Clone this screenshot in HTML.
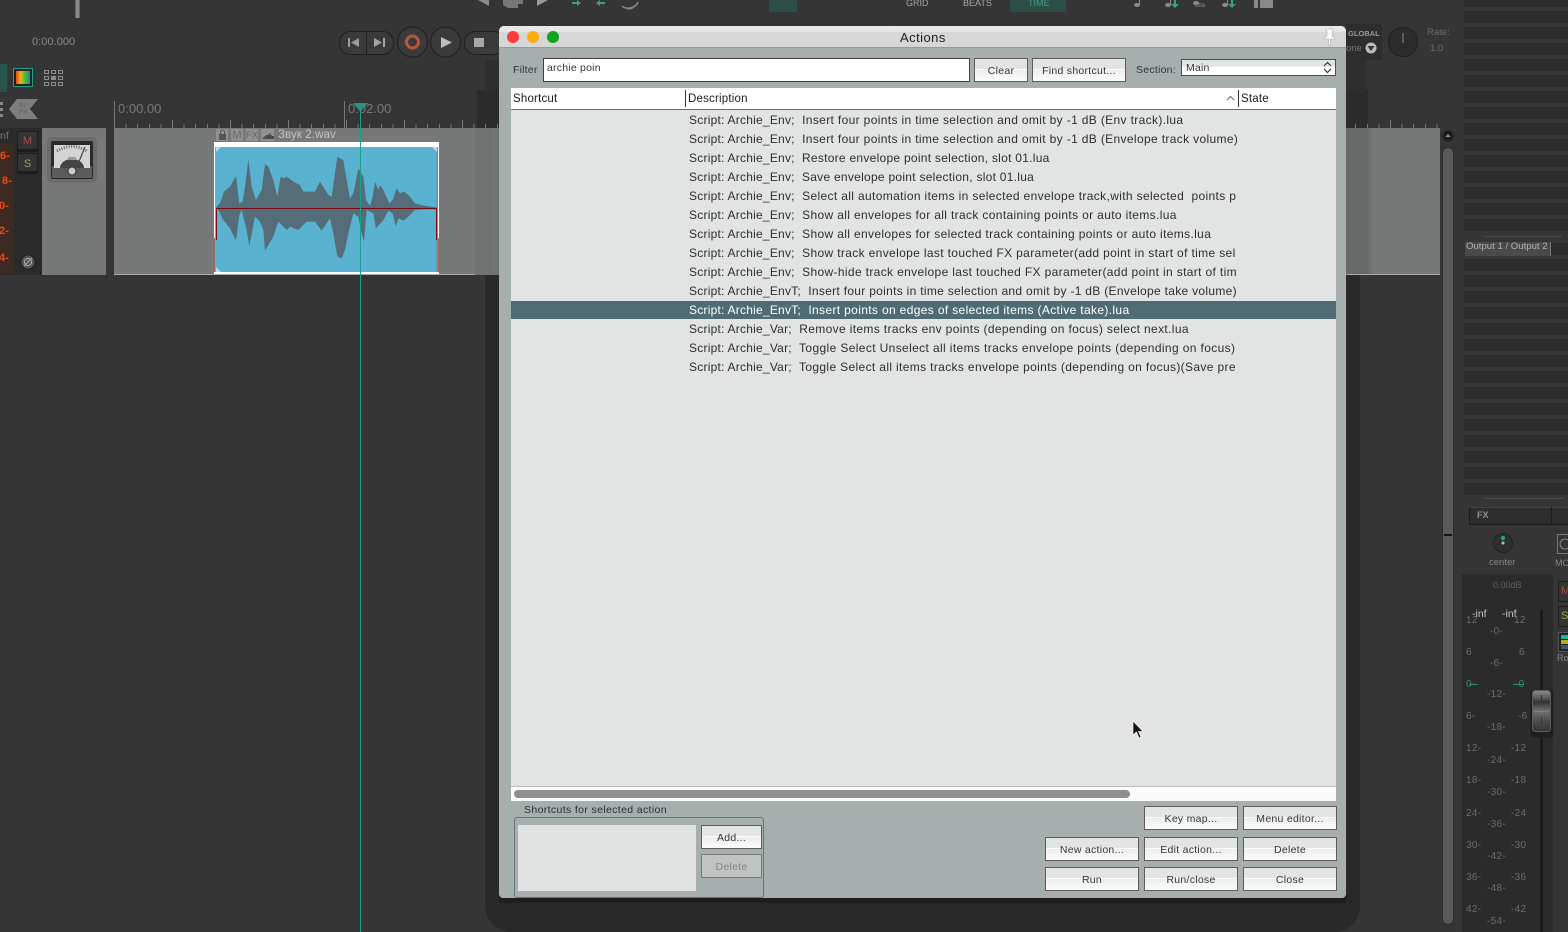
<!DOCTYPE html>
<html><head><meta charset="utf-8"><style>
html,body{margin:0;padding:0;width:1568px;height:932px;overflow:hidden;background:#353535;font-family:"Liberation Sans","Noto Sans CJK SC",sans-serif}
div,span,button{position:absolute;box-sizing:border-box}
.t{white-space:pre;line-height:1}
.r{position:absolute;left:689px;width:548px;height:19px;overflow:hidden;white-space:pre;font-size:12px;letter-spacing:.35px;line-height:21px;color:#2d2d33}
.r i{font-style:normal;letter-spacing:.23px}
.b{height:24px;width:94px;border:1px solid #5c5c5c;font-size:10.5px;letter-spacing:.27px;color:#33333a;text-align:center;line-height:25px;background:linear-gradient(#e3e5e4 0,#e3e5e4 46%,#fbfbfb 46%,#fbfbfb 51%,#eceeed 51%,#fbfbfb 100%);white-space:pre}
.g{color:#6c6c6c;font-size:10px;white-space:pre;line-height:1;letter-spacing:.3px}
</style></head><body>
<div style="left:0;top:0;width:1568px;height:932px;overflow:hidden;background:#353535">

<!-- right mixer stripes -->
<div style="left:1464px;top:0;width:104px;height:231px;background:repeating-linear-gradient(#2c2c2c 0 7px,#353535 7px 11px,#2c2c2c 11px 16px)"></div>
<div style="left:1464px;top:243px;width:104px;height:252px;background:repeating-linear-gradient(#2c2c2c 0 12px,#353535 12px 16px)"></div>
<div style="left:1485px;top:236px;width:77px;height:1px;background:#4c4c4c"></div>
<div style="left:1485px;top:498px;width:79px;height:1px;background:#4c4c4c"></div>
<div style="left:1464px;top:242px;width:87px;height:14px;background:#4a4a4a;border-left:1px solid #333;border-right:1px solid #777"></div>
<div class="t" style="left:1466px;top:242px;font-size:9.6px;color:#b3b3b3">Output 1 / Output 2</div>

<!-- dark shape behind dialog -->
<div style="left:485px;top:128px;width:875px;height:804px;background:#292929;border-radius:0 0 26px 26px"></div>
<div style="left:477px;top:90px;width:891px;height:40px;background:#2b2b2b"></div>
<div style="left:1346px;top:60px;width:20px;height:32px;background:#2e2e2e"></div>
<div style="left:485px;top:60px;width:20px;height:32px;background:#2e2e2e"></div>

<!-- ruler -->
<div style="left:114px;top:124px;width:1326px;height:4px;background:repeating-linear-gradient(90deg,#777 0 1px,transparent 1px 11.6px)"></div>
<div style="left:114px;top:120px;width:1326px;height:8px;background:repeating-linear-gradient(90deg,#777 0 1px,transparent 1px 58px)"></div>
<div style="left:114px;top:101px;width:1px;height:27px;background:#777"></div>
<div style="left:344px;top:101px;width:1px;height:27px;background:#777"></div>
<div class="t" style="left:118px;top:102px;font-size:13px;color:#787878">0:00.00</div>
<div class="t" style="left:348px;top:102px;font-size:13px;color:#787878">0:02.00</div>

<!-- track -->
<div style="left:114px;top:128px;width:1326px;height:147px;background:#777978;border-bottom:1px solid #aaa"></div>
<div style="left:475px;top:128px;width:24px;height:147px;background:#717372"></div>
<div style="left:493px;top:128px;width:1px;height:147px;background:#5f8190"></div>
<div style="left:1346px;top:128px;width:22px;height:146px;background:#666867"></div>
<div style="left:1351px;top:128px;width:1px;height:146px;background:#53788a"></div>
<div style="left:1368px;top:128px;width:3px;height:146px;background:#6d6f6e"></div>

<!-- track header -->
<div style="left:0;top:128px;width:42px;height:147px;background:#2a2a2a"></div>
<div style="left:42px;top:128px;width:64px;height:147px;background:#777978"></div>
<div style="left:0;top:143px;width:14px;height:130px;background:#3d2a22"></div>
<div class="t" style="left:0;top:131px;font-size:10.5px;color:#777">nf</div>
<div class="t" style="left:0;top:151px;font-size:11px;font-weight:bold;color:#f2470c">6-</div>
<div class="t" style="left:2px;top:176px;font-size:11px;font-weight:bold;color:#f2470c">8-</div>
<div class="t" style="left:-1px;top:201px;font-size:11px;font-weight:bold;color:#f2470c">0-</div>
<div class="t" style="left:-1px;top:226px;font-size:11px;font-weight:bold;color:#f2470c">2-</div>
<div class="t" style="left:-1px;top:253px;font-size:11px;font-weight:bold;color:#f2470c">4-</div>
<div style="left:17px;top:131px;width:21px;height:21px;background:#343434;border:1px solid #1d1d1d;border-bottom:3px solid #1d1d1d;color:#a64a44;font-size:11px;text-align:center;line-height:19px">M</div>
<div style="left:17px;top:153px;width:21px;height:21px;background:#343434;border:1px solid #1d1d1d;border-bottom:3px solid #1d1d1d;color:#a8a052;font-size:11px;text-align:center;line-height:20px">S</div>
<svg style="position:absolute;left:20px;top:254px" width="16" height="16"><circle cx="8" cy="8" r="7" fill="#555" stroke="#1f1f1f"/><circle cx="8" cy="8" r="3.6" fill="none" stroke="#aaa"/><path d="M4 12L12 4" stroke="#aaa"/></svg>
<!-- VU -->
<svg style="position:absolute;left:47px;top:137px" width="50" height="46"><rect width="50" height="46" rx="5" fill="#6b6d6c"/><rect x="4" y="4" width="42" height="38" rx="2" fill="#2a2a2a"/><rect x="5" y="29" width="40" height="12" fill="#5c5c5c"/><rect x="7" y="8" width="36" height="23" fill="#d2d5d4"/><path d="M10 14Q25 5 40 14" fill="none" stroke="#666" stroke-width="3" stroke-dasharray="1 1.5"/><path d="M31 27L38 10" stroke="#333"/><path d="M13 31a12 9 0 0 1 24 0z" fill="#444"/><circle cx="25" cy="34" r="4" fill="#ccc" stroke="#333"/><rect x="21" y="20" width="8" height="3" fill="#999"/></svg>

<!-- clip -->
<div style="left:216px;top:129px;width:12px;height:12px;background:#8f9190"></div>
<div style="left:231px;top:129px;width:12px;height:12px;background:#8f9190;color:#666;font-size:11px;text-align:center;line-height:13px">M</div>
<div style="left:246px;top:129px;width:12px;height:12px;background:#8f9190;color:#666;font-size:9.5px;text-align:center;line-height:13px">FX</div>
<div style="left:261px;top:129px;width:13px;height:12px;background:#8f9190"></div>
<svg style="position:absolute;left:216px;top:129px" width="60" height="12"><rect x="3" y="5" width="7" height="6" fill="#555"/><path d="M4.500 5V3a2 2 0 0 1 4 0V5" fill="none" stroke="#555"/><path d="M46 10L50 6H52L54 4 56 7H58V10z" fill="#4c4c4c"/></svg>
<div class="t" style="left:278px;top:130px;font-size:11.500px;color:#c3c5c4;letter-spacing:.1px">Звук 2.wav</div>
<svg style="position:absolute;left:0;top:0" width="1568" height="932">
<rect x="214" y="142" width="225" height="132" fill="#fff"/>
<rect x="215" y="147" width="223" height="125" fill="#5ab2d1"/>
<rect x="436" y="147" width="2" height="125" fill="#5d98b8"/>
<g transform="scale(.33333)">
<path fill="#546d78" d="M648 622L660 610 672 575 690 560 708 528 718 610 728 605 735 560 745 478 755 560 768 600 785 570 795 492 805 500 820 540 832 590 842 530 850 535 860 530 880 545 900 555 910 575 945 575 960 545 985 585 995 590 1005 520 1012 470 1020 475 1030 480 1040 540 1050 595 1060 580 1075 505 1090 530 1098 600 1110 618 1118 590 1125 545 1135 570 1140 555 1150 570 1168 610 1178 600 1190 565 1200 580 1212 575 1225 585 1245 610 1270 617 1310 622 1310 628 1270 628 1245 630 1225 650 1210 662 1195 655 1188 680 1178 640 1165 632 1150 660 1128 685 1120 640 1100 630 1092 725 1085 700 1075 650 1060 640 1045 700 1035 750 1025 775 1012 770 1000 700 990 655 965 692 945 665 920 665 895 690 870 680 860 690 835 665 820 710 795 752 790 690 780 665 765 650 748 738 740 690 725 630 718 645 708 722 690 685 670 660 655 630z"/>
</g>
<path d="M216.500 240V208.500H436.500V240" fill="none" stroke="#7c0a12" stroke-width="1"/>
<path d="M214.500 238V272M438.500 238V272" stroke="#b06060" stroke-width="1"/>
<path d="M216 147l5 0-5 5zM437 147l-5 0 5 5zM216 272l5 0-5-5z" fill="#b9dbe6"/>
<rect x="360" y="103" width="1" height="829" fill="#1f9d8b"/>
<path d="M353 103H368L360.500 112z" fill="#2f8f82"/>
</svg>

<!-- top left controls -->
<div style="left:75px;top:0;width:5px;height:18px;background:#8a8a8a;border-left:1px solid #666;border-right:1px solid #666"></div>
<div class="t" style="left:32px;top:37px;font-size:11px;color:#8b8b8b;letter-spacing:.05px">0:00.000</div>
<div style="left:0;top:64px;width:7px;height:28px;background:#24564c"></div>
<div style="left:13px;top:68px;width:20px;height:19px;border:1px solid #2b9a89;background:#222"></div>
<div style="left:16px;top:71px;width:14px;height:13px;background:linear-gradient(90deg,#e44b1c,#e8b818,#4bb832,#1b88c9)"></div>
<svg style="position:absolute;left:44px;top:70px" width="20" height="17" fill="none" stroke="#8c8c8c"><rect x=".5" y=".5" width="4" height="3"/><rect x="7.500" y=".5" width="4" height="3"/><rect x="14.500" y=".5" width="4" height="3"/><rect x=".5" y="6.500" width="4" height="3"/><rect x="7.500" y="6.500" width="4" height="3" fill="#8c8c8c"/><rect x="14.500" y="6.500" width="4" height="3"/><rect x=".5" y="12.500" width="4" height="3"/><rect x="7.500" y="12.500" width="4" height="3"/><rect x="14.500" y="12.500" width="4" height="3"/></svg>
<svg style="position:absolute;left:0;top:98px" width="40" height="22"><path d="M9 11L17 1H38L30 11 38 21H17z" fill="#7d7f7e"/><rect x="0" y="4" width="3" height="3" fill="#888"/><rect x="0" y="10" width="3" height="3" fill="#888"/><rect x="0" y="16" width="3" height="3" fill="#888"/></svg>
<div class="t" style="left:19px;top:103px;font-size:6.500px;color:#5f5f5f">IN</div>
<div class="t" style="left:19px;top:110px;font-size:6.500px;color:#5f5f5f">FX</div>

<!-- transport -->
<svg style="position:absolute;left:335px;top:25px" width="170" height="36">
<rect x="4.500" y="6.500" width="54" height="23" rx="11" fill="#3a3a3a" stroke="#1f1f1f"/><path d="M31.500 7V30" stroke="#222"/>
<path d="M13 13h2v9h-2zM24 13v9l-8-4.500z" fill="#9a9a9a"/><path d="M39 13v9l8-4.500zM48 13h2v9h-2z" fill="#a5a5a5"/>
<circle cx="77.500" cy="17" r="15" fill="#3a3a3a" stroke="#1f1f1f"/><circle cx="77.500" cy="17" r="6" fill="none" stroke="#b5573c" stroke-width="3"/>
<circle cx="110.500" cy="17" r="15" fill="#3a3a3a" stroke="#1f1f1f"/><path d="M106 12V23L117 17.500z" fill="#bdbdbd"/>
<rect x="129.500" y="6.500" width="40" height="23" rx="11" fill="#3a3a3a" stroke="#1f1f1f"/><rect x="139" y="13" width="10" height="9" fill="#a8a8a8"/>
</svg>

<!-- top strip fragments -->
<svg style="position:absolute;left:470px;top:0" width="820" height="14">
<path d="M8 0L19 6V0z" fill="#8a8a8a"/><path d="M33 0H53V4H48V8H38L33 5z" fill="#777"/><path d="M67 0V6L78 0z" fill="#999"/>
<path d="M102 2h5V0l4 3-4 3V4h-5z" fill="#3d9d8b"/><path d="M135 2h-5V0l-4 3 4 3V4h5z" fill="#3d9d8b"/>
<path d="M152 6C156 10 166 8 168 2M156 8C160 10 164 8 165 5" fill="none" stroke="#888" stroke-width="1.500"/>
<rect x="299" y="0" width="28" height="12" fill="#2c4e46"/><rect x="540" y="0" width="56" height="12" fill="#2c4e46"/>
<g fill="#8a8a8a"><ellipse cx="667" cy="5" rx="3" ry="2"/><path d="M669 0h1v5h-1z"/><ellipse cx="698" cy="5" rx="3" ry="2"/><path d="M700 0h1v5h-1z"/><ellipse cx="726" cy="3" rx="3" ry="2"/><ellipse cx="755" cy="5" rx="3" ry="2"/><path d="M757 0h1v5h-1z"/><rect x="784" y="0" width="4" height="8"/></g>
<g fill="#3d9d8b"><path d="M704 0h2v4h3l-4 4-4-4h3z"/><path d="M761 0h2v4h3l-4 4-4-4h3z"/></g>
<rect x="790" y="0" width="13" height="8" fill="#888"/>
</svg>
<div class="t" style="left:906px;top:-1px;font-size:9px;color:#a5a5a5">GRID</div>
<div class="t" style="left:963px;top:-1px;font-size:9px;color:#a5a5a5">BEATS</div>
<div class="t" style="left:1028px;top:-1px;font-size:9px;color:#3d9d8b">TIME</div>
<div class="t" style="left:1195px;top:3px;font-size:6px;color:#888">8ba</div>

<!-- global/rate -->
<div style="left:1346px;top:24px;width:36px;height:36px;background:#2d2d2d"></div>
<div class="t" style="left:1348px;top:30px;font-size:7.500px;font-weight:bold;color:#9a9a9a">GLOBAL</div>
<div class="t" style="left:1346px;top:44px;font-size:9.500px;color:#777">one</div>
<svg style="position:absolute;left:1364px;top:41px" width="14" height="14"><circle cx="7" cy="7" r="5.500" fill="#bbb"/><path d="M3.500 5H10.500L7 10z" fill="#333"/></svg>
<svg style="position:absolute;left:1386px;top:25px" width="34" height="34"><circle cx="17" cy="17" r="14.500" fill="#2c2c2c" stroke="#1e1e1e"/><path d="M17 8V18" stroke="#888"/></svg>
<div class="t" style="left:1427px;top:28px;font-size:9.500px;color:#6c6c6c">Rate:</div>
<div class="t" style="left:1430px;top:44px;font-size:9.500px;color:#6c6c6c">1.0</div>

<!-- vertical scrollbar -->
<div style="left:1442px;top:147px;width:12px;height:778px;background:#5a5a5a;border:1px solid #2b2b2b;border-radius:6px"></div>
<svg style="position:absolute;left:1442px;top:130px" width="12" height="12"><circle cx="6" cy="6" r="5.500" fill="#1d1d1d"/><path d="M6 4L8.500 7h-5z" fill="#999"/></svg>
<div style="left:1444px;top:534px;width:8px;height:2px;background:#151515"></div>

<!-- FX strip -->
<div style="left:1469px;top:507px;width:99px;height:18px;background:#2d2d2d;border:1px solid #1c1c1c;border-top-color:#444;border-right:0"></div>
<div style="left:1551px;top:507px;width:1px;height:17px;background:#1c1c1c"></div>
<div class="t" style="left:1477px;top:511px;font-size:9px;font-weight:bold;color:#929292">FX</div>
<svg style="position:absolute;left:1492px;top:532px" width="22" height="22"><circle cx="11" cy="11" r="9.500" fill="#2f2f2f" stroke="#222"/><circle cx="11" cy="6" r="2" fill="#10b598"/><circle cx="11" cy="11" r="1.500" fill="#bbb"/></svg>
<div class="t" style="left:1489px;top:558px;font-size:9.500px;color:#858585">center</div>
<div style="left:1557px;top:534px;width:11px;height:20px;background:#333;border:1px solid #777;border-right:0"></div>
<svg style="position:absolute;left:1558px;top:537px" width="10" height="14" fill="none" stroke="#8a8a8a"><circle cx="7" cy="7" r="5"/></svg>
<div class="t" style="left:1555px;top:559px;font-size:9px;color:#858585">MO</div>

<!-- master strip -->
<div style="left:1462px;top:574px;width:91px;height:358px;background:#2b2b2b"></div>
<div class="t" style="left:1493px;top:581px;font-size:9px;color:#5f5f5f">0.00dB</div>
<div class="t" style="left:1472px;top:609px;font-size:10.500px;color:#c8c8c8">-inf</div>
<div class="t" style="left:1502px;top:609px;font-size:10.500px;color:#c8c8c8">-inf</div>
<div style="left:0;top:1px;width:1568px;height:931px">
<div class="g" style="left:1466px;top:615px">12</div><div class="g" style="left:1514px;top:615px">12</div>
<div class="g" style="left:1466px;top:647px">6</div><div class="g" style="left:1519px;top:647px">6</div>
<div class="g" style="left:1466px;top:679px;color:#3c8a70">0-</div><div class="g" style="left:1515px;top:679px;color:#3c8a70">-0</div>
<div style="left:1469px;top:683px;width:9px;height:1px;background:#1d8f72"></div><div style="left:1513px;top:683px;width:11px;height:1px;background:#1d8f72"></div>
<div class="g" style="left:1466px;top:711px">6-</div><div class="g" style="left:1518px;top:711px">-6</div>
<div class="g" style="left:1466px;top:743px">12-</div><div class="g" style="left:1511px;top:743px">-12</div>
<div class="g" style="left:1466px;top:775px">18-</div><div class="g" style="left:1511px;top:775px">-18</div>
<div class="g" style="left:1466px;top:808px">24-</div><div class="g" style="left:1511px;top:808px">-24</div>
<div class="g" style="left:1466px;top:840px">30-</div><div class="g" style="left:1511px;top:840px">-30</div>
<div class="g" style="left:1466px;top:872px">36-</div><div class="g" style="left:1511px;top:872px">-36</div>
<div class="g" style="left:1466px;top:904px">42-</div><div class="g" style="left:1511px;top:904px">-42</div>
<div class="g" style="left:1490px;top:626px">-0-</div>
<div class="g" style="left:1490px;top:658px">-6-</div>
<div class="g" style="left:1487px;top:689px">-12-</div>
<div class="g" style="left:1487px;top:722px">-18-</div>
<div class="g" style="left:1487px;top:755px">-24-</div>
<div class="g" style="left:1487px;top:787px">-30-</div>
<div class="g" style="left:1487px;top:819px">-36-</div>
<div class="g" style="left:1487px;top:851px">-42-</div>
<div class="g" style="left:1487px;top:883px">-48-</div>
<div class="g" style="left:1487px;top:916px">-54-</div>
</div>
<div style="left:1540px;top:610px;width:3px;height:322px;background:#1a1a1a"></div>
<svg style="position:absolute;left:1530px;top:689px" width="24" height="50"><defs><linearGradient id="c" x1="0" y1="0" x2="0" y2="1"><stop offset="0" stop-color="#8c8c8c"/><stop offset=".2" stop-color="#555"/><stop offset=".28" stop-color="#333"/><stop offset=".5" stop-color="#707070"/><stop offset=".75" stop-color="#4c4c4c"/><stop offset="1" stop-color="#333"/></linearGradient></defs><rect x=".5" y=".5" width="23" height="48" rx="4" fill="#1e1e1e"/><rect x="2.500" y="1.500" width="18" height="41" rx="3" fill="url(#c)" stroke="#5c5c5c"/><path d="M4 22.500H19" stroke="#16b397"/><path d="M11.500 6V12M11.500 28V36" stroke="#333"/></svg>
<div style="left:1558px;top:581px;width:10px;height:21px;background:#333;border:1px solid #1d1d1d;border-right:0;color:#a64a44;font-size:11px;line-height:19px;overflow:hidden;padding-left:2px">M</div>
<div style="left:1558px;top:606px;width:10px;height:21px;background:#333;border:1px solid #1d1d1d;border-right:0;color:#a8a052;font-size:11px;line-height:19px;overflow:hidden;padding-left:2px">S</div>
<div style="left:1558px;top:632px;width:10px;height:20px;background:#222;border:1px solid #555;border-right:0"></div>
<div style="left:1561px;top:635px;width:7px;height:4px;background:#17b89a"></div>
<div style="left:1561px;top:640px;width:7px;height:4px;background:#c0a814"></div>
<div style="left:1561px;top:645px;width:7px;height:4px;background:#3c5a68"></div>
<div class="t" style="left:1557px;top:654px;font-size:9px;color:#858585">Ro</div>

<!-- DIALOG -->
<div style="left:499px;top:890px;width:847px;height:13px;background:#1f1f1f"></div>
<div style="left:499px;top:26px;width:847px;height:872px;background:#a7afae;border-radius:5px 5px 4px 4px;overflow:hidden">
<div style="left:0;top:0;width:847px;height:22px;background:linear-gradient(#e8eaea 0,#e6e8e7 25%,#d6d7d7 30%,#d5d6d6 100%);border-bottom:1px solid #979a99"></div>
</div>
<div style="left:507px;top:31px;width:12px;height:12px;border-radius:50%;background:#fc3d39"></div>
<div style="left:527px;top:31px;width:12px;height:12px;border-radius:50%;background:#fbae0b"></div>
<div style="left:547px;top:31px;width:12px;height:12px;border-radius:50%;background:#0fa51d"></div>
<div class="t" style="left:900px;top:31px;font-size:13px;color:#1e1e1e;letter-spacing:.45px">Actions</div>
<svg style="position:absolute;left:1322px;top:28px" width="15" height="18"><path d="M4 1H11V3L10 4V8L13 10V11H8.500V17L7.500 18 6.500 17V11H2V10L5 8V4L4 3z" fill="#fafafa" stroke="#aaa" stroke-width=".6"/></svg>

<div class="t" style="left:513px;top:65px;font-size:10.500px;color:#33333a;letter-spacing:.2px">Filter</div>
<div style="left:543px;top:58px;width:427px;height:24px;background:#fff;border:1px solid #3f3f3f"></div>
<div class="t" style="left:547px;top:63px;font-size:10.500px;color:#33333a;letter-spacing:.22px">archie poin</div>
<div class="b" style="left:974px;top:58px;width:54px">Clear</div>
<div class="b" style="left:1032px;top:58px;width:94px">Find shortcut...</div>
<div class="t" style="left:1136px;top:65px;font-size:10.500px;color:#33333a;letter-spacing:.25px">Section:</div>
<div style="left:1181px;top:59px;width:155px;height:17px;border:1px solid #4c4c4c;background:linear-gradient(#e2e4e3 0,#e2e4e3 45%,#fff 45%)"></div>
<div class="t" style="left:1186px;top:63px;font-size:10.500px;color:#33333a;letter-spacing:.2px">Main</div>
<svg style="position:absolute;left:1322px;top:60px" width="11" height="15" fill="none" stroke="#333" stroke-width="1.200"><path d="M2 6L5.500 2.500 9 6M2 9L5.500 12.500 9 9"/></svg>

<!-- list -->
<div style="left:511px;top:88px;width:825px;height:22px;background:#fff;border-bottom:1px solid #6d6d6d"></div>
<div style="left:685px;top:90px;width:1px;height:17px;background:#333"></div>
<div style="left:1238px;top:90px;width:1px;height:17px;background:#333"></div>
<div class="t" style="left:513px;top:94px;font-size:11.500px;color:#1c1c1c;letter-spacing:.2px">Shortcut</div>
<div class="t" style="left:688px;top:94px;font-size:11.500px;color:#1c1c1c;letter-spacing:.2px">Description</div>
<div class="t" style="left:1241px;top:94px;font-size:11.500px;color:#1c1c1c;letter-spacing:.2px">State</div>
<svg style="position:absolute;left:1226px;top:95px" width="9" height="7" fill="none" stroke="#666"><path d="M1 5L4.500 1.500 8 5"/></svg>
<div style="left:511px;top:110px;width:825px;height:676px;background:#e2e4e3"></div>
<div style="left:511px;top:301px;width:825px;height:18px;background:#4f6b74"></div>
<div class="r" style="top:110px"><i>Script: Archie_Env;</i>  Insert four points in time selection and omit by -1 dB (Env track).lua</div>
<div class="r" style="top:129px"><i>Script: Archie_Env;</i>  Insert four points in time selection and omit by -1 dB (Envelope track volume)</div>
<div class="r" style="top:148px;letter-spacing:.27px"><i>Script: Archie_Env;</i>  Restore envelope point selection, slot 01.lua</div>
<div class="r" style="top:167px;letter-spacing:.27px"><i>Script: Archie_Env;</i>  Save envelope point selection, slot 01.lua</div>
<div class="r" style="top:186px"><i>Script: Archie_Env;</i>  Select all automation items in selected envelope track,with selected  points p</div>
<div class="r" style="top:205px"><i>Script: Archie_Env;</i>  Show all envelopes for all track containing points or auto items.lua</div>
<div class="r" style="top:224px"><i>Script: Archie_Env;</i>  Show all envelopes for selected track containing points or auto items.lua</div>
<div class="r" style="top:243px"><i>Script: Archie_Env;</i>  Show track envelope last touched FX parameter(add point in start of time sel</div>
<div class="r" style="top:262px"><i>Script: Archie_Env;</i>  Show-hide track envelope last touched FX parameter(add point in start of tim</div>
<div class="r" style="top:281px;letter-spacing:.3px"><i>Script: Archie_EnvT;</i>  Insert four points in time selection and omit by -1 dB (Envelope take volume)</div>
<div class="r" style="top:300px;color:#fff"><i>Script: Archie_EnvT;</i>  Insert points on edges of selected items (Active take).lua</div>
<div class="r" style="top:319px"><i>Script: Archie_Var;</i>  Remove items tracks env points (depending on focus) select next.lua</div>
<div class="r" style="top:338px;letter-spacing:.37px"><i>Script: Archie_Var;</i>  Toggle Select Unselect all items tracks envelope points (depending on focus)</div>
<div class="r" style="top:357px"><i>Script: Archie_Var;</i>  Toggle Select all items tracks envelope points (depending on focus)(Save pre</div>
<div style="left:511px;top:786px;width:825px;height:15px;background:#fbfbfb;border-top:1px solid #bcbfbe"></div>
<div style="left:514px;top:790px;width:616px;height:8px;background:#8f8f8f;border-radius:4px"></div>

<!-- cursor -->
<svg style="position:absolute;left:1130px;top:719px" width="16" height="22"><path d="M3 2V16L6.500 13 9 19 11 18 8.500 12.500H13z" fill="#111" stroke="#eee" stroke-width=".7"/></svg>

<!-- shortcuts group -->
<div class="t" style="left:524px;top:805px;font-size:10.500px;color:#2d2d33;letter-spacing:.36px">Shortcuts for selected action</div>
<div style="left:514px;top:817px;width:250px;height:81px;border:1px solid #69747a;border-radius:3px"></div>
<div style="left:518px;top:825px;width:178px;height:66px;background:#e1e3e2"></div>
<div class="b" style="left:701px;top:825px;width:61px">Add...</div>
<div class="b" style="left:701px;top:854px;width:61px;background:#bfc3c2;color:#808484;border-color:#747a79">Delete</div>

<div class="b" style="left:1144px;top:806px">Key map...</div>
<div class="b" style="left:1243px;top:806px">Menu editor...</div>
<div class="b" style="left:1045px;top:837px">New action...</div>
<div class="b" style="left:1144px;top:837px">Edit action...</div>
<div class="b" style="left:1243px;top:837px">Delete</div>
<div class="b" style="left:1045px;top:867px">Run</div>
<div class="b" style="left:1144px;top:867px">Run/close</div>
<div class="b" style="left:1243px;top:867px">Close</div>
</div>
</body></html>
